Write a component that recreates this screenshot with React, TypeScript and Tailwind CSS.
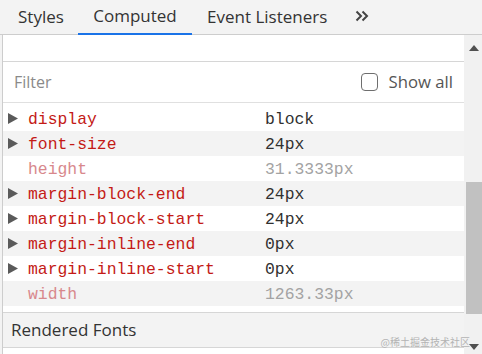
const rows = [
  { name: 'display', value: 'block', dim: false },
  { name: 'font-size', value: '24px', dim: false },
  { name: 'height', value: '31.3333px', dim: true },
  { name: 'margin-block-end', value: '24px', dim: false },
  { name: 'margin-block-start', value: '24px', dim: false },
  { name: 'margin-inline-end', value: '0px', dim: false },
  { name: 'margin-inline-start', value: '0px', dim: false },
  { name: 'width', value: '1263.33px', dim: true },
];

const sans = "font-['Open_Sans',sans-serif]";

function Triangle() {
  return (
    <svg width="10" height="11" viewBox="0 0 10 11" className="shrink-0">
      <path d="M0 0 L10 5.5 L0 11 Z" fill="#5a5a5a" />
    </svg>
  );
}

export default function App() {
  return (
    <div className={`relative w-[482px] h-[354px] overflow-hidden bg-white ${sans}`}>
      {/* tab strip */}
      <div className="h-[35px] bg-[#f3f3f3] border-b border-[#cdcdcd] flex items-stretch text-[17px] text-[#333]">
        <div className="w-[78px] pl-[18px] flex items-center pb-[1px]">Styles</div>
        <div className="w-[114px] flex items-center justify-center pb-[1px] border-b-[2px] border-[#1a73e8] -mb-px">
          Computed
        </div>
        <div className="pl-[15px] pr-[28px] flex items-center pb-[1px]">Event Listeners</div>
        <div className="flex items-center pb-[2px]">
          <svg width="14" height="12" viewBox="0 0 14 12">
            <path d="M1.5 1.5 L6 6 L1.5 10.5 M7.5 1.5 L12 6 L7.5 10.5" stroke="#444" strokeWidth="2" fill="none" />
          </svg>
        </div>
      </div>

      <div className="flex h-[319px] bg-[#f3f3f3] pl-[2px]">
        <div className="flex-1 flex flex-col bg-white border-l border-[#cdcdcd]">
          <div className="h-[27px] border-b border-[#d6d6d6]" />
          <div className="h-[41px] border-b border-[#e0e0e0] flex items-center pl-[11px] pr-[11px]">
            <span className="flex-1 text-[16px] text-[#8a8a8a]">Filter</span>
            <span className="w-[17px] h-[18px] rounded-[4px] border border-[#6e6e6e] mr-[11px]" />
            <span className="text-[16.7px] text-[#555]">Show all</span>
          </div>
          <div className="pt-[3px] pb-[6px] border-b border-[#d6d6d6] font-['Liberation_Mono',monospace] text-[16.4px]">
            {rows.map((r, i) => (
              <div
                key={r.name}
                className={`h-[25px] flex items-center pt-[4px] ${i % 2 === 1 ? 'bg-[#f3f3f3]' : 'bg-white'}`}
              >
                <div className="w-[25px] pl-[5px] flex items-center pb-[5px]">
                  {!r.dim && <Triangle />}
                </div>
                <div className={`w-[237px] ${r.dim ? 'text-[#d8888c]' : 'text-[#c41a16]'}`}>{r.name}</div>
                <div className={r.dim ? 'text-[#a3a3a3]' : 'text-[#303030]'}>{r.value}</div>
              </div>
            ))}
          </div>
          <div className="h-[35px] bg-[#f3f3f3] border-b border-[#d6d6d6] flex items-center pl-[8px] text-[17px] text-[#333]">
            Rendered Fonts
          </div>
          <div className="flex-1 bg-white" />
        </div>

        {/* scrollbar */}
        <div className="w-[18px] bg-[#f1f1f1] flex flex-col">
          <div className="h-[26px] flex items-center justify-center pl-[2px]">
            <svg width="10" height="6" viewBox="0 0 10 6">
              <path d="M0 6 L5 0 L10 6 Z" fill="#505050" />
            </svg>
          </div>
          <div className="h-[121px]" />
          <div className="h-[132px] ml-[2px] bg-[#c1c1c1]" />
          <div className="flex-1" />
          <div className="h-[10px] flex items-start justify-center pl-[2px]">
            <svg width="10" height="6" viewBox="0 0 10 6">
              <path d="M0 0 L10 0 L5 6 Z" fill="#505050" />
            </svg>
          </div>
        </div>
      </div>

      {/* watermark */}
      <div className="absolute right-[12px] bottom-[5px] text-[10px] text-[#b4b4b4] font-['Noto_Sans_CJK_SC',sans-serif]">
        @稀土掘金技术社区
      </div>
    </div>
  );
}
